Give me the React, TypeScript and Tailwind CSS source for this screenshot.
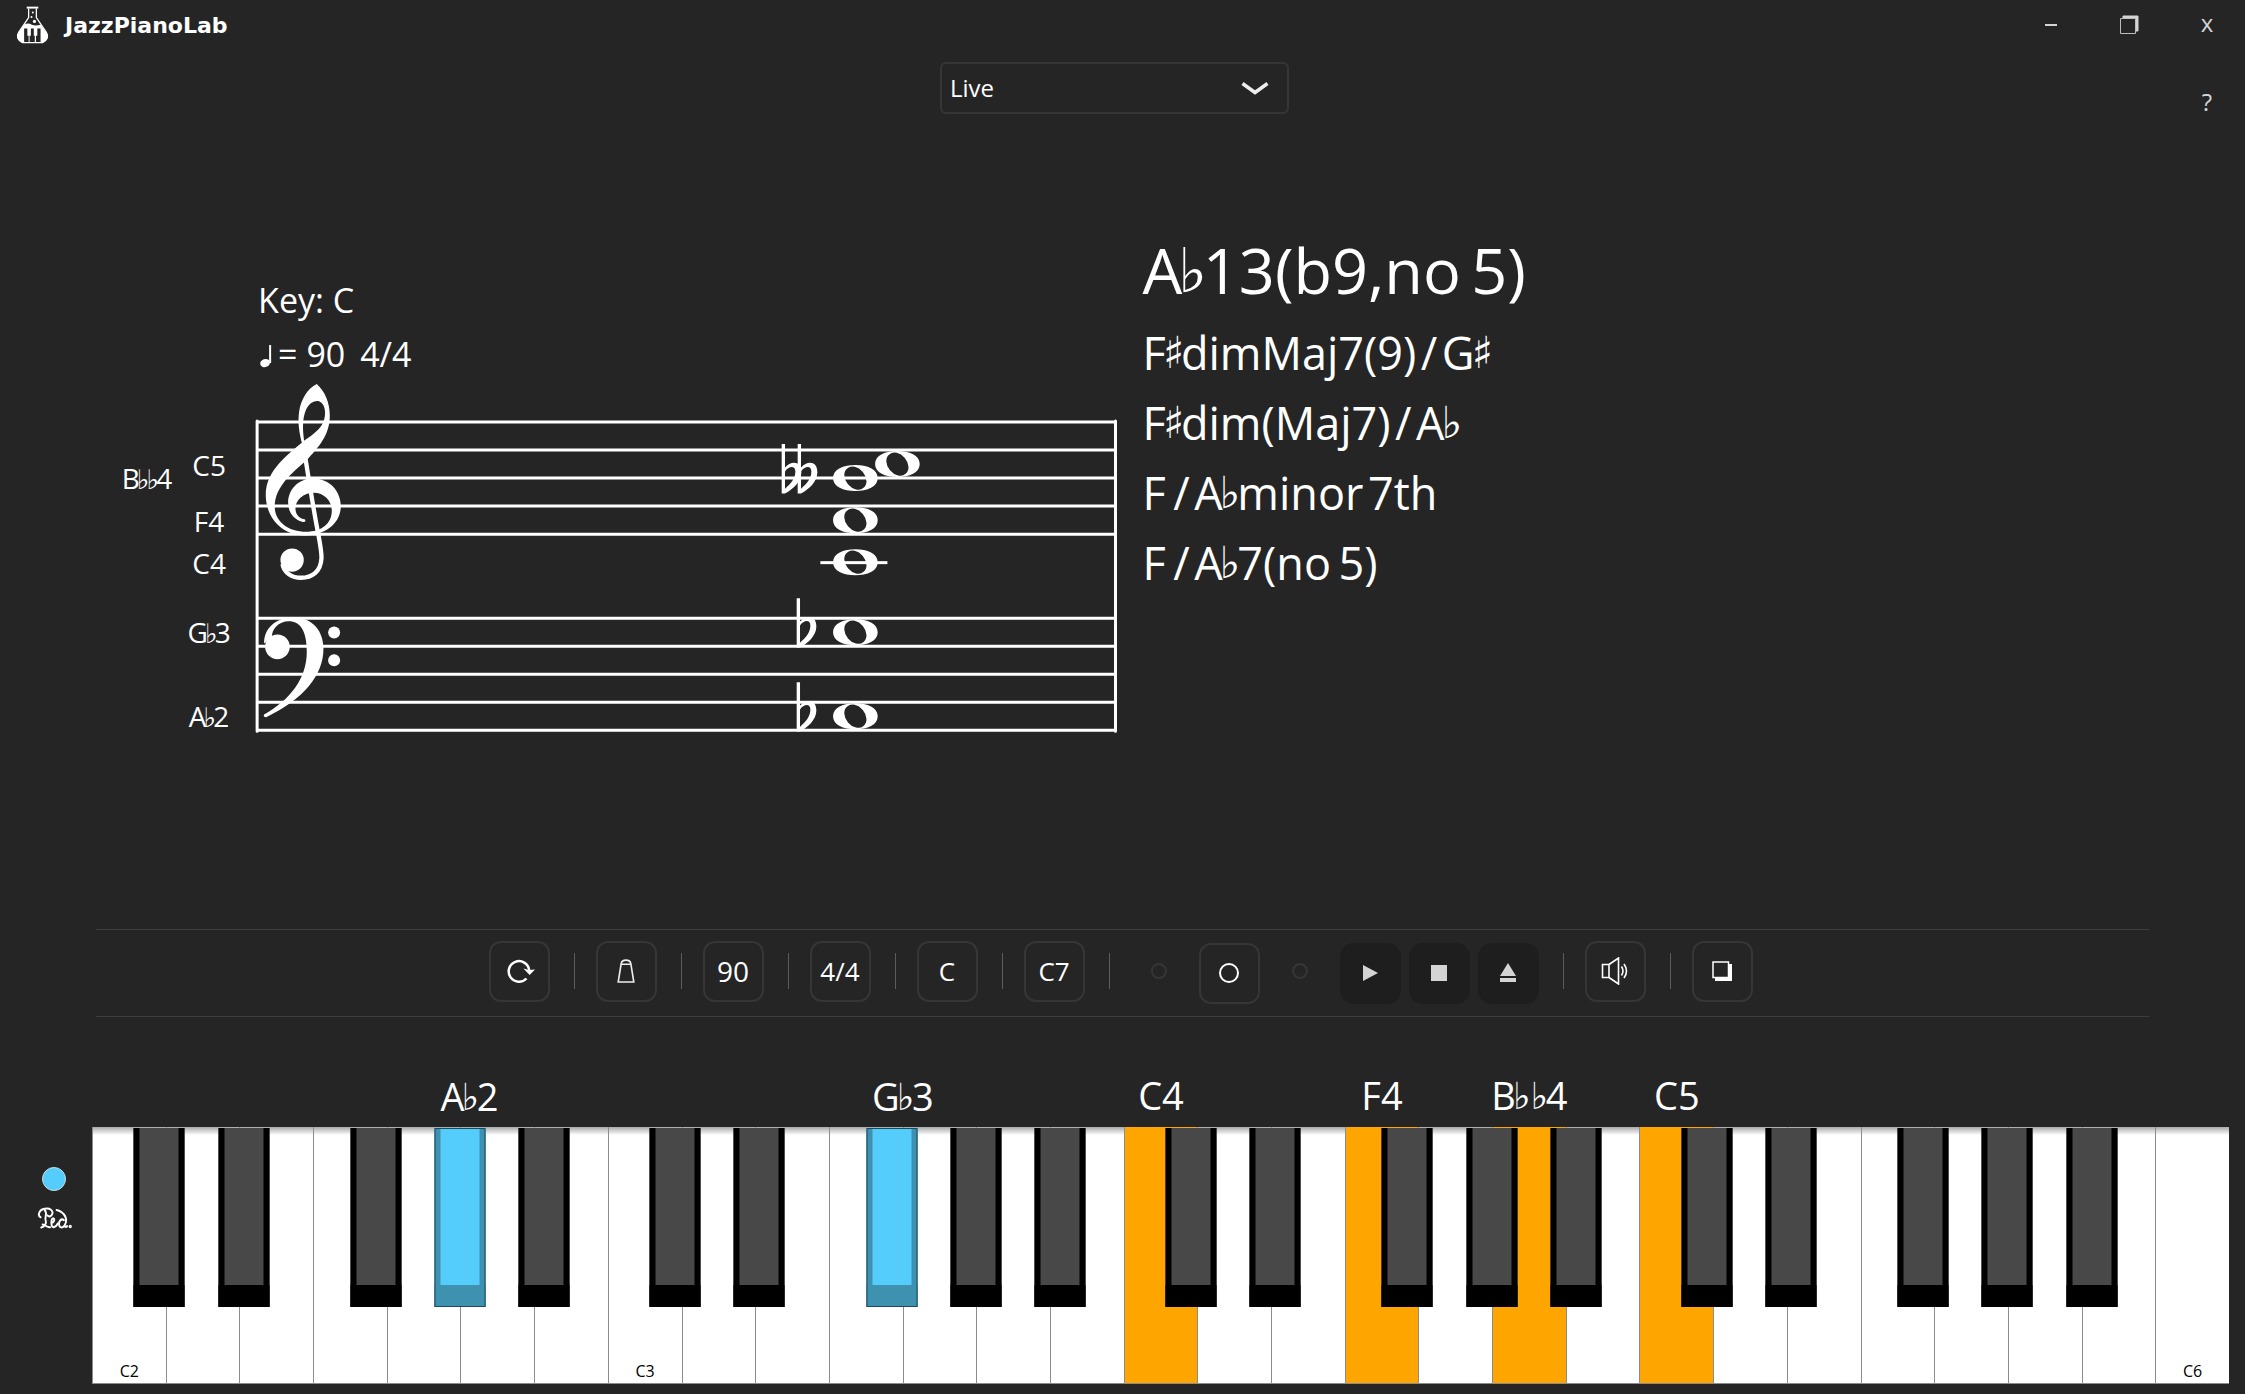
import React, { useState } from "react";

const WHITE_NOTES = ["C", "D", "E", "F", "G", "A", "B"];
const WHITE_COUNT = 29;

// centre of each black key inside one octave, counted in white keys
const BLACK_CENTERS = [0.916, 2.057, 3.85, 4.993, 6.135];

type Note = { label: string; x: number; y: number; ledger?: boolean };

const STAFF_LINES = [422, 450, 478, 506, 534, 618, 646, 674, 702, 730];

const NOTES: Note[] = [
  { label: "C5", x: 897, y: 464 },
  { label: "B♭♭4", x: 855, y: 478 },
  { label: "F4", x: 855, y: 520 },
  { label: "C4", x: 855, y: 562, ledger: true },
  { label: "G♭3", x: 855, y: 632 },
  { label: "A♭2", x: 855, y: 716 },
];

const LABELS = [
  { text: "C5", x: 209, y: 476 },
  { text: "B♭♭4", x: 147, y: 489 },
  { text: "F4", x: 209, y: 532 },
  { text: "C4", x: 209, y: 574 },
  { text: "G♭3", x: 209, y: 643 },
  { text: "A♭2", x: 209, y: 727 },
];

const CHORDS = [
  "F♯dimMaj7(9)\u200A/\u200AG♯",
  "F♯dim(Maj7)\u200A/\u200AA♭",
  "F\u2009/\u200AA♭minor\u200A7th",
  "F\u2009/\u200AA♭7(no\u20095)",
];

// Accidentals come from a different font than the letters around them
const Accidentals: React.FC<{ text: string }> = ({ text }) => (
  <>
    {text.split(/([♭♯]+)/).map((part, i) =>
      /[♭♯]/.test(part) ? (
        <span key={i} className="-mx-[0.07em] align-[0.04em] font-['DejaVu_Sans'] text-[0.98em] leading-none">
          {part}
        </span>
      ) : (
        part
      )
    )}
  </>
);

const Logo = () => (
  <svg viewBox="48 16 102 118" className="h-[38px] w-[33px]" aria-hidden="true">
    <rect x="81" y="18" width="36" height="6" fill="#fff" />
    <path d="M87 24V52L56 98Q44 117 68 130H130Q154 117 142 98L111 52V24" fill="none" stroke="#fff" strokeWidth="4" />
    <path d="M74 73Q86 68 97 74Q108 79 124 74L144 102Q151 117 130 131H68Q47 117 54 102Z" fill="#fff" />
    <circle cx="100" cy="36" r="3" fill="#fff" />
    <circle cx="96" cy="50" r="3" fill="#fff" />
    <circle cx="105" cy="64" r="5" fill="#fff" />
    <path d="M73 86H83V108H87V128H73ZM94 86H103V108H106V128H90V108H94ZM114 86H124V128H110V108H114Z" fill="#252525" />
  </svg>
);

const WholeNote: React.FC<{ x: number; y: number }> = ({ x, y }) => (
  <g transform={`translate(${x} ${y}) scale(0.3333)`}>
    <path
      fillRule="evenodd"
      d="M-67 0C-67 -26 -36 -39 0 -39S67 -26 67 0S36 39 0 39S-67 26 -67 0ZM-24.4 -29.1A38 28 50 1 0 24.4 29.1A38 28 50 1 0 -24.4 -29.1Z"
    />
  </g>
);

const Flat: React.FC<{ x: number; y: number }> = ({ x, y }) => (
  <g transform={`translate(${x} ${y}) scale(0.3333)`}>
    <path d="M-5 0H5V70C22 51 54 48 54 85C54 112 30 134 5 148H-5ZM5 82V134C22 118 36 104 36 82C36 62 15 66 5 82Z" fillRule="evenodd" />
  </g>
);

const Score = () => (
  <svg viewBox="0 220 1122 540" className="block h-auto w-full fill-white font-['Open_Sans',sans-serif]" role="img" aria-label="Score">
    <text x="258" y="313" fontSize="34">Key: C</text>
    <ellipse cx="265" cy="363" rx="5" ry="4" transform="rotate(-20 265 363)" />
    <rect x="269" y="345" width="2" height="18" />
    <text x="278" y="367" fontSize="34">= 90</text>
    <text x="360" y="367" fontSize="34">4/4</text>

    {LABELS.map((l) => (
      <text key={l.text} x={l.x} y={l.y} fontSize="28" textAnchor="middle">
        {l.text.split("").map((ch, i) =>
          ch === "♭" ? (
            <tspan key={i} fontSize="27" dx="-3" className="font-['DejaVu_Sans']">{ch}</tspan>
          ) : (
            <tspan key={i} dx={i > 0 && l.text.length > 2 ? "-3" : "0"}>{ch}</tspan>
          )
        )}
      </text>
    ))}

    <g stroke="#fff" strokeWidth="3" fill="none">
      {STAFF_LINES.map((y) => (
        <path key={y} d={`M257 ${y}H1115`} />
      ))}
      <path d="M257 421V731M1115 421V731" strokeLinecap="round" />
    </g>

    <g transform="translate(100 260) scale(0.3333)">
      {/* treble clef */}
      <path
        fillRule="evenodd"
        d="M650 372C675 395 690 430 689 470C688 525 655 562 620 600C575 640 524 680 524 740C524 785 565 815 618 815C665 815 695 790 695 752C695 722 672 698 641 698C610 698 586 720 586 745C586 765 600 776 615 778C618 784 612 787 606 785C580 778 564 755 564 728C564 688 595 655 638 655C688 655 722 692 722 738C722 790 675 826 615 826C545 826 497 772 497 705C497 640 545 597 605 548C598 520 592 490 597 455C602 420 622 385 650 372ZM612 542C606 500 608 470 618 448C628 428 645 420 658 424C678 432 680 470 665 495C652 515 630 530 612 542Z"
      />
      <path
        d="M616 595C627 665 643 765 656 830C662 865 665 880 664 895C662 935 635 953 603 953C575 953 552 938 547 912"
        fill="none"
        stroke="#fff"
        strokeWidth="13"
      />
      <circle cx="576" cy="900" r="35" />
      {/* bass clef */}
      <path d="M492 1150C492 1105 525 1072 580 1072C640 1072 670 1115 670 1165C670 1245 610 1318 498 1371Q488 1370 492 1363C570 1320 620 1255 620 1175C620 1110 600 1083 566 1083C535 1083 513 1108 516 1132Z" />
      <circle cx="532" cy="1160" r="37" />
      <circle cx="702" cy="1117" r="18" />
      <circle cx="702" cy="1200" r="18" />
    </g>

    {NOTES.map((n) => (
      <React.Fragment key={n.label}>
        {n.ledger && <rect x={n.x - 35} y={n.y - 1} width="67" height="3" />}
        <WholeNote x={n.x} y={n.y} />
      </React.Fragment>
    ))}
    <Flat x={783} y={444} />
    <Flat x={799} y={444} />
    <Flat x={798} y={598} />
    <Flat x={798} y={682} />
  </svg>
);

const Separator = () => <div className="mr-[21px] ml-6 h-9 w-px bg-[#5c5c5c]" />;

const ToolButton: React.FC<{ label: string; children: React.ReactNode }> = ({ label, children }) => (
  <button aria-label={label} className="flex size-[61px] items-center justify-center rounded-xl border-2 border-[#363636] text-[26px] leading-none text-white">
    {children}
  </button>
);

const TransportButton: React.FC<{ label: string; children: React.ReactNode }> = ({ label, children }) => (
  <button aria-label={label} className="flex size-[61px] items-center justify-center rounded-[14px] bg-[#1e1e1e]">
    <svg viewBox="0 0 20 20" className="size-5 fill-[#d4d4d4]">{children}</svg>
  </button>
);

const Toolbar = () => (
  <div className="mx-24 mt-auto flex h-[88px] items-center justify-center border-y border-[#3d3d3d] pr-1 pb-1">
    <ToolButton label="Loop">
      <svg viewBox="0 0 28 24" className="ml-1 h-6 w-7" fill="none" stroke="#fff" strokeWidth="2.5">
        <path d="M19.5 19.5A10.3 10.3 0 1 1 22.2 11" />
        <path d="M16.5 9.5L22 11L28 10.5L22.6 16Z" fill="#fff" stroke="none" />
      </svg>
    </ToolButton>
    <Separator />
    <ToolButton label="Metronome">
      <svg viewBox="0 0 18 24" className="h-6 w-[18px]" fill="none" stroke="#eee" strokeWidth="1.6">
        <path d="M1.2 23L4.2 4.5C5 0 13 0 13.8 4.5L16.8 23ZM4.2 5.2H13.8" />
      </svg>
    </ToolButton>
    <Separator />
    <ToolButton label="Tempo"><span className="text-[28px]">90</span></ToolButton>
    <Separator />
    <ToolButton label="Time signature">4/4</ToolButton>
    <Separator />
    <ToolButton label="Key">C</ToolButton>
    <Separator />
    <ToolButton label="Chord">C7</ToolButton>
    <Separator />
    <div className="ml-5 size-4 rounded-full border-2 border-[#363636]" />
    <div className="mx-8 pt-1">
      <ToolButton label="Record">
        <span className="size-5 rounded-full border-2 border-white" />
      </ToolButton>
    </div>
    <div className="size-4 rounded-full border-2 border-[#363636]" />
    <div className="ml-8 flex gap-2 pt-1">
      <TransportButton label="Play"><path d="M3 2L18 10L3 18Z" /></TransportButton>
      <TransportButton label="Stop"><path d="M2 2H18V18H2Z" /></TransportButton>
      <TransportButton label="Eject"><path d="M10 0L18 13H2ZM2 15H18V19H2Z" /></TransportButton>
    </div>
    <Separator />
    <ToolButton label="Volume">
      <svg viewBox="0 0 28 28" className="size-7" fill="none" stroke="#fff" strokeWidth="1.6">
        <path d="M1.5 7.5H8V20.5H1.5ZM8 7.5L17.5 1V27L8 20.5M20.5 9.5Q23.5 14 20.5 18.500M23 7Q28 14 23 21" />
      </svg>
    </ToolButton>
    <Separator />
    <ToolButton label="Windows">
      <svg viewBox="0 0 20 20" className="size-5">
        <path d="M17 3H20V20H3V17H17Z" fill="#fff" />
        <path d="M1 1H16.500V16.500H1Z" fill="none" stroke="#fff" strokeWidth="1.5" />
      </svg>
    </ToolButton>
  </div>
);

const whiteLabels: Record<number, string> = { 14: "C4", 17: "F4", 19: "B♭♭4", 21: "C5" };
const blackLabels: Record<number, string> = { 3: "A♭2", 7: "G♭3" };

const Piano = () => {
  const blackKeys = Array.from({ length: 20 }, (_, i) => Math.floor(i / 5) * 7 + BLACK_CENTERS[i % 5]);

  return (
    <div className="relative flex h-[257px] flex-1">
      {Array.from({ length: WHITE_COUNT }, (_, i) => {
        const label = whiteLabels[i];
        const octave = 2 + Math.floor(i / 7);
        const showName = i % 7 === 0 && !label;
        return (
          <button
            key={i}
            aria-label={`${WHITE_NOTES[i % 7]}${octave}`}
            className={`relative flex flex-1 items-end justify-center border-b border-l border-[#8c8c8c] text-base leading-6 text-black ${
              label ? "bg-[#ffa500]" : "bg-white bg-linear-to-b from-[#aaa] to-white to-[8px]"
            }`}
          >
            {showName && `C${octave}`}
            {label && (
              <span className="absolute bottom-full left-1/2 -translate-x-1/2 pb-0.5 text-[38px] leading-[60px] whitespace-nowrap text-white">
                <Accidentals text={label} />
              </span>
            )}
          </button>
        );
      })}
      {blackKeys.map((center, i) => {
        const label = blackLabels[i];
        return (
          <button
            key={i}
            aria-label={`Black key ${i + 1}`}
            className={`absolute top-px h-[179px] w-[51px] -translate-x-1/2 border-x-[6px] border-b-[22px] ${
              label ? "border-[#3e92b0] bg-[#55cdfc] outline -outline-offset-1 outline-[#1d4a5b]" : "border-black bg-[#484848]"
            }`}
            style={{ left: `${(center / WHITE_COUNT) * 100}%` }}
          >
            {label && (
              <span className="absolute bottom-full left-0 pb-0.5 text-[38px] leading-[60px] whitespace-nowrap text-white">
                <Accidentals text={label} />
              </span>
            )}
          </button>
        );
      })}
    </div>
  );
};

const Pedal = () => (
  <div className="flex w-[92px] flex-col items-center gap-4 pt-10 pl-4">
    <div className="size-6 rounded-full border border-[#c5dce5] bg-[#55cdfc]" />
    <svg
      viewBox="102 438 100 60"
      preserveAspectRatio="none"
      className="h-[22px] w-[35px]"
      fill="none"
      stroke="#fff"
      strokeWidth="5.5"
      strokeLinecap="round"
      role="img"
      aria-label="Pedal"
    >
      <path d="M112 466C104 462 106 446 124 443C140 440 148 448 146 456C144 464 136 466 132 461" />
      <path d="M124 446C134 456 122 468 127 476C130 484 122 492 114 494M118 486C126 486 132 496 140 493" />
      <path d="M144 482C152 479 153 470 149 469C141 470 141 494 150 493C156 492 159 488 161 483" />
      <path d="M179 474C171 468 164 476 165 486C167 496 176 496 181 488C190 474 184 452 158 446M181 488C183 494 187 494 188 490" />
      <circle cx="197" cy="491" r="2" />
    </svg>
  </div>
);

export default function App() {
  const [mode, setMode] = useState("Live");

  return (
    <div className="flex min-h-screen flex-col bg-[#252525] font-['Open_Sans',sans-serif] text-white">
      <header className="flex h-[50px] items-center justify-between pr-4 pl-4">
        <div className="flex items-center gap-4">
          <Logo />
          <h1 className="pt-0.5 font-['DejaVu_Sans',sans-serif] text-[22px] leading-none font-bold">JazzPianoLab</h1>
        </div>
        <div className="flex gap-[34px] text-[#d4d4d4]">
          <button aria-label="Minimize" className="flex size-11 items-center justify-center">
            <span className="h-0.5 w-3 bg-[#d4d4d4]" />
          </button>
          <button aria-label="Restore" className="flex size-11 items-center justify-center">
            <svg viewBox="0 0 20 20" className="size-5">
              <path d="M4 1H19V16H17V3H4Z" fill="#d4d4d4" stroke="#d4d4d4" />
              <path d="M1.500 3.500H16.500V18.500H1.500Z" fill="none" stroke="#bbb" />
            </svg>
          </button>
          <button aria-label="Close" className="size-11 pb-1 text-2xl leading-none">x</button>
        </div>
      </header>

      <div className="relative flex justify-center pt-3 pr-4">
        <div className="relative w-[349px]">
          <select
            aria-label="Mode"
            value={mode}
            onChange={(e) => setMode(e.target.value)}
            className="h-[52px] w-full appearance-none rounded-md border-2 border-[#363636] bg-[#252525] px-2 text-2xl text-white"
          >
            <option>Live</option>
          </select>
          <svg viewBox="0 0 28 14" className="pointer-events-none absolute top-5 right-5 h-[14px] w-7" fill="none" stroke="#eee" strokeWidth="3.5">
            <path d="M1.500 1.500L14 10.500L26.500 1.500" />
          </svg>
        </div>
        <button aria-label="Help" className="absolute right-4 bottom-0 size-11 pt-5 text-2xl leading-none text-[#d4d4d4]">?</button>
      </div>

      <main className="mt-[106px] grid grid-cols-2">
        <Score />
        <section className="pt-3 pl-5 whitespace-nowrap">
          <h2 className="mb-[10px] text-[63px] leading-[76px]">
            <Accidentals text={"A♭13(b9,no\u20095)"} />
          </h2>
          {CHORDS.map((chord) => (
            <p key={chord} className="text-[45px] leading-[70px]">
              <Accidentals text={chord} />
            </p>
          ))}
        </section>
      </main>

      <Toolbar />

      <div className="mt-[110px] flex pr-4 pb-[10px]">
        <Pedal />
        <Piano />
      </div>
    </div>
  );
}
